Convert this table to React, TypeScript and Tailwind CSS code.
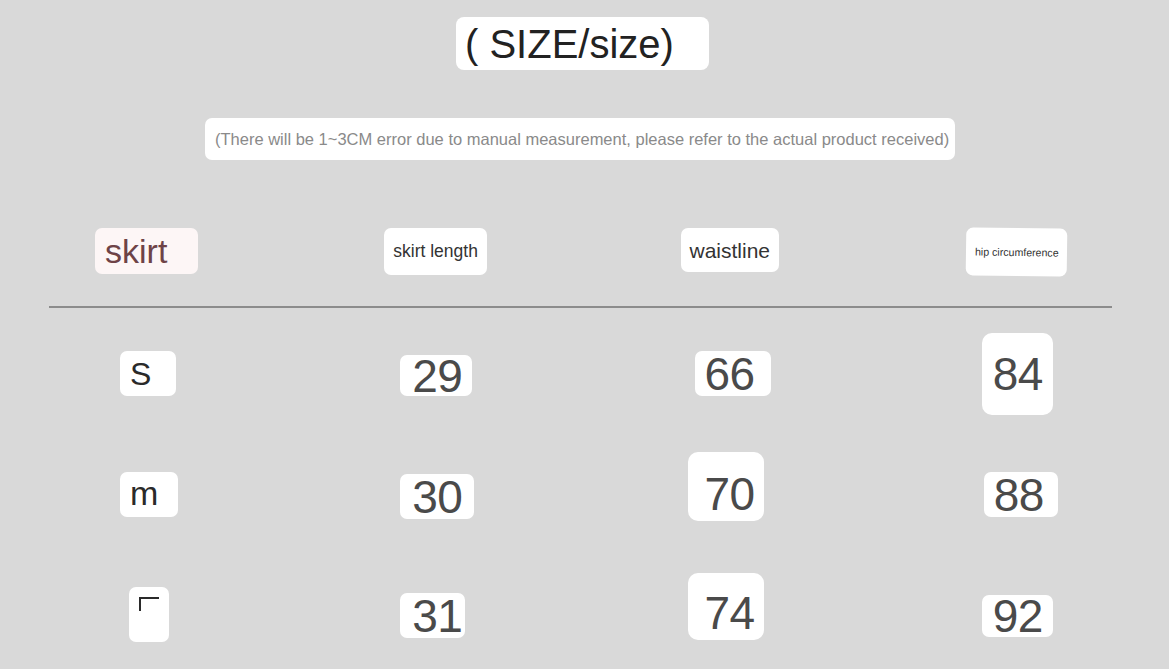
import React from "react";

type CellProps = { cls: string; text: string; textCls: string };

function Cell({ cls, text, textCls }: CellProps) {
  return (
    <div className={`flex items-center bg-white rounded-[7px] self-start ${cls}`}>
      <span className={textCls}>{text}</span>
    </div>
  );
}

const NUM = "text-[46px] leading-none text-[#4a4a4a] tracking-[-0.5px]";

export default function App() {
  return (
    <div
      className="w-[1169px] h-[669px] overflow-hidden bg-[#d9d9d9] flex flex-col"
      style={{ fontFamily: '"Liberation Sans", Arial, sans-serif' }}
    >
      {/* title */}
      <div className="mt-[17px] ml-[456px] w-[253px] h-[53px] bg-white rounded-[8px] flex items-center pl-[9px]">
        <span className="text-[40px] leading-none text-[#222]">( SIZE/size)</span>
      </div>

      {/* subtitle */}
      <div className="mt-[48px] ml-[205px] w-[750px] h-[42px] bg-white rounded-[7px] flex items-center pl-[10px]">
        <span className="text-[16.5px] leading-none text-[#8a8a8a] whitespace-nowrap">
          (There will be 1~3CM error due to manual measurement, please refer to the actual product received)
        </span>
      </div>

      {/* header row */}
      <div className="mt-[68px] h-[78px] grid grid-cols-4">
        <Cell
          cls="ml-[95px] w-[103px] h-[46px] pl-[10px] !bg-[#fdf6f6]"
          text="skirt"
          textCls="text-[34px] leading-none text-[#6e4347]"
        />
        <Cell
          cls="ml-[92px] w-[103px] h-[47px] pl-[9px]"
          text="skirt length"
          textCls="text-[17.5px] leading-none text-[#333]"
        />
        <Cell
          cls="ml-[96px] w-[98px] h-[44px] pl-[9px]"
          text="waistline"
          textCls="text-[21px] leading-none text-[#333]"
        />
        <Cell
          cls="ml-[89px] w-[101px] h-[48px] pl-[9px] rotate-[0.8deg]"
          text="hip circumference"
          textCls="text-[10.6px] leading-none text-[#333]"
        />
      </div>

      {/* divider */}
      <div className="ml-[49px] w-[1063px] h-[2px] bg-[#8c8c8c]" />

      {/* row 1 */}
      <div className="h-[120px] grid grid-cols-4">
        <Cell cls="ml-[120px] mt-[43px] w-[56px] h-[45px] pl-[10px]" text="S" textCls="text-[32px] leading-none text-[#2a2a2a]" />
        <Cell cls="ml-[108px] mt-[47px] w-[72px] h-[41px] pl-[12px]" text="29" textCls={NUM} />
        <Cell cls="ml-[110px] mt-[43px] w-[76px] h-[45px] pl-[10px]" text="66" textCls={NUM} />
        <Cell cls="ml-[105px] mt-[25px] w-[71px] h-[82px] pl-[11px] !rounded-[10px]" text="84" textCls={NUM} />
      </div>

      {/* row 2 */}
      <div className="h-[120px] grid grid-cols-4">
        <Cell cls="ml-[120px] mt-[44px] w-[58px] h-[45px] pl-[10px]" text="m" textCls="text-[34px] leading-none text-[#2a2a2a] -mt-[4px]" />
        <Cell cls="ml-[108px] mt-[46px] w-[74px] h-[45px] pl-[12px]" text="30" textCls={NUM} />
        <Cell cls="ml-[103px] mt-[24px] w-[76px] h-[69px] pl-[17px] !rounded-[10px]" text="70" textCls={NUM + " mt-[14px]"} />
        <Cell cls="ml-[107px] mt-[44px] w-[74px] h-[45px] pl-[10px]" text="88" textCls={NUM} />
      </div>

      {/* row 3 */}
      <div className="h-[121px] grid grid-cols-4">
        <div className="ml-[129px] mt-[39px] w-[40px] h-[55px] bg-white rounded-[7px] self-start relative">
          <div className="absolute left-[10px] top-[10px] w-[20px] h-[14px] border-l-2 border-t-2 border-[#2a2a2a]" />
        </div>
        <Cell cls="ml-[108px] mt-[45px] w-[65px] h-[45px] pl-[12px]" text="31" textCls={NUM} />
        <Cell cls="ml-[103px] mt-[25px] w-[76px] h-[67px] pl-[17px] !rounded-[10px]" text="74" textCls={NUM + " mt-[12px]"} />
        <Cell cls="ml-[105px] mt-[47px] w-[71px] h-[42px] pl-[11px]" text="92" textCls={NUM} />
      </div>
    </div>
  );
}
